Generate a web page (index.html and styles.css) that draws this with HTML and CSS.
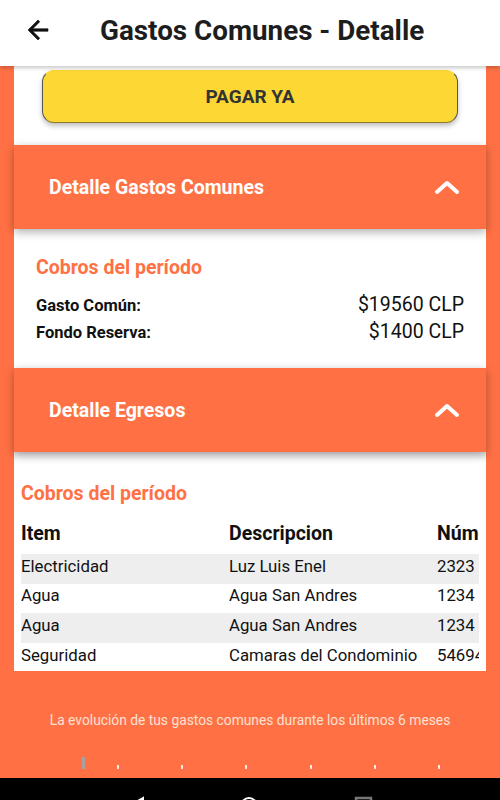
FILE: index.html
```html
<!DOCTYPE html>
<html lang="es">
<head>
<meta charset="utf-8">
<title>Gastos Comunes - Detalle</title>
<link rel="stylesheet" href="styles.css">
</head>
<body>
<div class="screen">
  <header class="appbar">
    <svg class="back" width="30" height="30" viewBox="0 0 24 24"><path d="M20 11H7.83l5.59-5.59L12 4l-8 8 8 8 1.41-1.41L7.83 13H20v-2z" fill="#111" stroke="#111" stroke-width="0.5"/></svg>
    <h1 class="title">Gastos Comunes - Detalle</h1>
  </header>

  <main class="content">
    <section class="card pay-card">
      <button class="pay-btn">PAGAR YA</button>
    </section>

    <section class="panel">
      <div class="panel-head">
        <span>Detalle Gastos Comunes</span>
        <svg class="chev" width="26" height="16" viewBox="0 0 26 16"><polyline points="3,13 13,4 23,13" fill="none" stroke="#fff" stroke-width="4" stroke-linecap="round" stroke-linejoin="round"/></svg>
      </div>
      <div class="panel-body body-one">
        <h2 class="sub">Cobros del período</h2>
        <div class="line"><span class="lbl">Gasto Común:</span><span class="amt">$19560 CLP</span></div>
        <div class="line"><span class="lbl">Fondo Reserva:</span><span class="amt">$1400 CLP</span></div>
      </div>
    </section>

    <section class="panel">
      <div class="panel-head">
        <span>Detalle Egresos</span>
        <svg class="chev" width="26" height="16" viewBox="0 0 26 16"><polyline points="3,13 13,4 23,13" fill="none" stroke="#fff" stroke-width="4" stroke-linecap="round" stroke-linejoin="round"/></svg>
      </div>
      <div class="panel-body body-two">
        <h2 class="sub sub-two">Cobros del período</h2>
        <div class="table-wrap">
          <div class="trow thead"><span>Item</span><span>Descripcion</span><span>Número</span></div>
          <div class="trow alt"><span>Electricidad</span><span>Luz Luis Enel</span><span>2323</span></div>
          <div class="trow"><span>Agua</span><span>Agua San Andres</span><span>1234</span></div>
          <div class="trow alt"><span>Agua</span><span>Agua San Andres</span><span>1234</span></div>
          <div class="trow"><span>Seguridad</span><span>Camaras del Condominio</span><span>546940</span></div>
        </div>
      </div>
    </section>

    <p class="evo">La evolución de tus gastos comunes durante los últimos 6 meses</p>

    <div class="axis">
      <span class="bar"></span>
      <span class="tick"></span><span class="tick"></span><span class="tick"></span>
      <span class="tick"></span><span class="tick"></span><span class="tick"></span>
    </div>
  </main>

  <nav class="sysnav">
    <svg width="20" height="22" viewBox="0 0 20 22"><polygon points="17,4 3,12 17,20" fill="none" stroke="#fff" stroke-width="2"/></svg>
    <svg width="22" height="22" viewBox="0 0 22 22"><circle cx="11" cy="12" r="8" fill="none" stroke="#fff" stroke-width="2"/></svg>
    <svg width="22" height="22" viewBox="0 0 22 22"><rect x="4" y="4" width="15" height="15" fill="none" stroke="#777" stroke-width="2.5"/></svg>
  </nav>
</div>
</body>
</html>
```

FILE: styles.css
```css
* { box-sizing: border-box; }
html, body { margin: 0; padding: 0; }
body {
  background: #ff7144;
  font-family: Roboto, "Noto Sans", "Liberation Sans", sans-serif;
}
.screen {
  width: 500px;
  height: 800px;
  overflow: hidden;
  display: flex;
  flex-direction: column;
  background: #ff7144;
}
.appbar {
  position: relative;
  z-index: 3;
  height: 66px;
  flex: none;
  background: #fff;
  display: flex;
  align-items: center;
  padding: 0 0 6px 23px;
  box-shadow: 0 2px 4px rgba(0,0,0,0.22);
}
.back { flex: none; }
.title {
  margin: 0 0 0 47px;
  font-size: 27.8px;
  font-weight: 700;
  color: #1d1d1d;
  white-space: nowrap;
}
.content {
  flex: 1;
  display: flex;
  flex-direction: column;
  padding: 0 14px;
  min-height: 0;
}
.card { background: #fff; }
.pay-card {
  position: relative;
  z-index: 1;
  height: 79px;
  padding: 4px 28px 0;
}
.pay-btn {
  width: 100%;
  height: 53px;
  border: 1px solid #555;
  border-top-color: #fdd835;
  border-bottom-color: #8a7a2a;
  border-radius: 12px;
  background: #fdd835;
  color: #333;
  font-family: inherit;
  font-size: 19px;
  font-weight: 700;
  box-shadow: 0 3px 5px rgba(0,0,0,0.25);
}
.panel { position: relative; }
.panel-head {
  position: relative;
  z-index: 2;
  height: 84px;
  background: #ff7144;
  color: #fff;
  font-size: 19.5px;
  font-weight: 700;
  display: flex;
  align-items: center;
  justify-content: space-between;
  padding: 0 26px 0 35px;
  box-shadow: 0 3px 9px rgba(0,0,0,0.32);
}
.chev { margin-top: -1px; }
.panel-body { background: #fff; }
.body-one {
  height: 139px;
  padding: 27px 22px 0 22px;
}
.sub {
  margin: 0;
  color: #ff7144;
  font-size: 19.5px;
  font-weight: 700;
  line-height: 24px;
}
.line {
  display: flex;
  justify-content: space-between;
  align-items: baseline;
  height: 27px;
  line-height: 27px;
}
.body-one .sub { margin-bottom: 11px; }
.lbl { font-size: 16.5px; font-weight: 700; color: #111; }
.amt { font-size: 19.5px; color: #111; }
.body-two {
  height: 219px;
  padding: 30px 7px 0 7px;
  box-shadow: inset 0 8px 10px -6px rgba(0,0,0,0.15);
}
.sub-two { margin-bottom: 8px; }
.table-wrap {
  width: 458px;
  overflow: hidden;
}
.trow {
  display: grid;
  grid-template-columns: 208px 208px 208px;
  height: 29.7px;
  align-items: start;
  padding-top: 1.5px;
  line-height: 20px;
  font-size: 16.8px;
  color: #111;
  white-space: nowrap;
}
.trow span { overflow: hidden; }
.trow.alt { background: #eeeeee; }
.thead {
  height: 40px;
  padding-top: 7px;
  line-height: 26px;
  font-size: 19.5px;
  font-weight: 700;
}
.evo {
  margin: 41px 0 0;
  text-align: center;
  color: #fde0d4;
  font-size: 13.8px;
  line-height: 16px;
}
.axis {
  margin-top: 29px;
  margin-left: 68px;
  display: flex;
  align-items: flex-end;
  height: 12px;
}
.bar {
  width: 3px;
  height: 12px;
  background: #a8a0a0;
}
.tick {
  width: 2px;
  height: 4px;
  background: #ffe6de;
  margin-left: 62.2px;
}
.bar + .tick { margin-left: 32px; }
.sysnav {
  flex: none;
  height: 22px;
  background: #000;
  display: flex;
  justify-content: space-around;
  padding: 0 80px;
  overflow: hidden;
  align-items: flex-start;
}
.sysnav svg { margin-top: 16px; }
```
